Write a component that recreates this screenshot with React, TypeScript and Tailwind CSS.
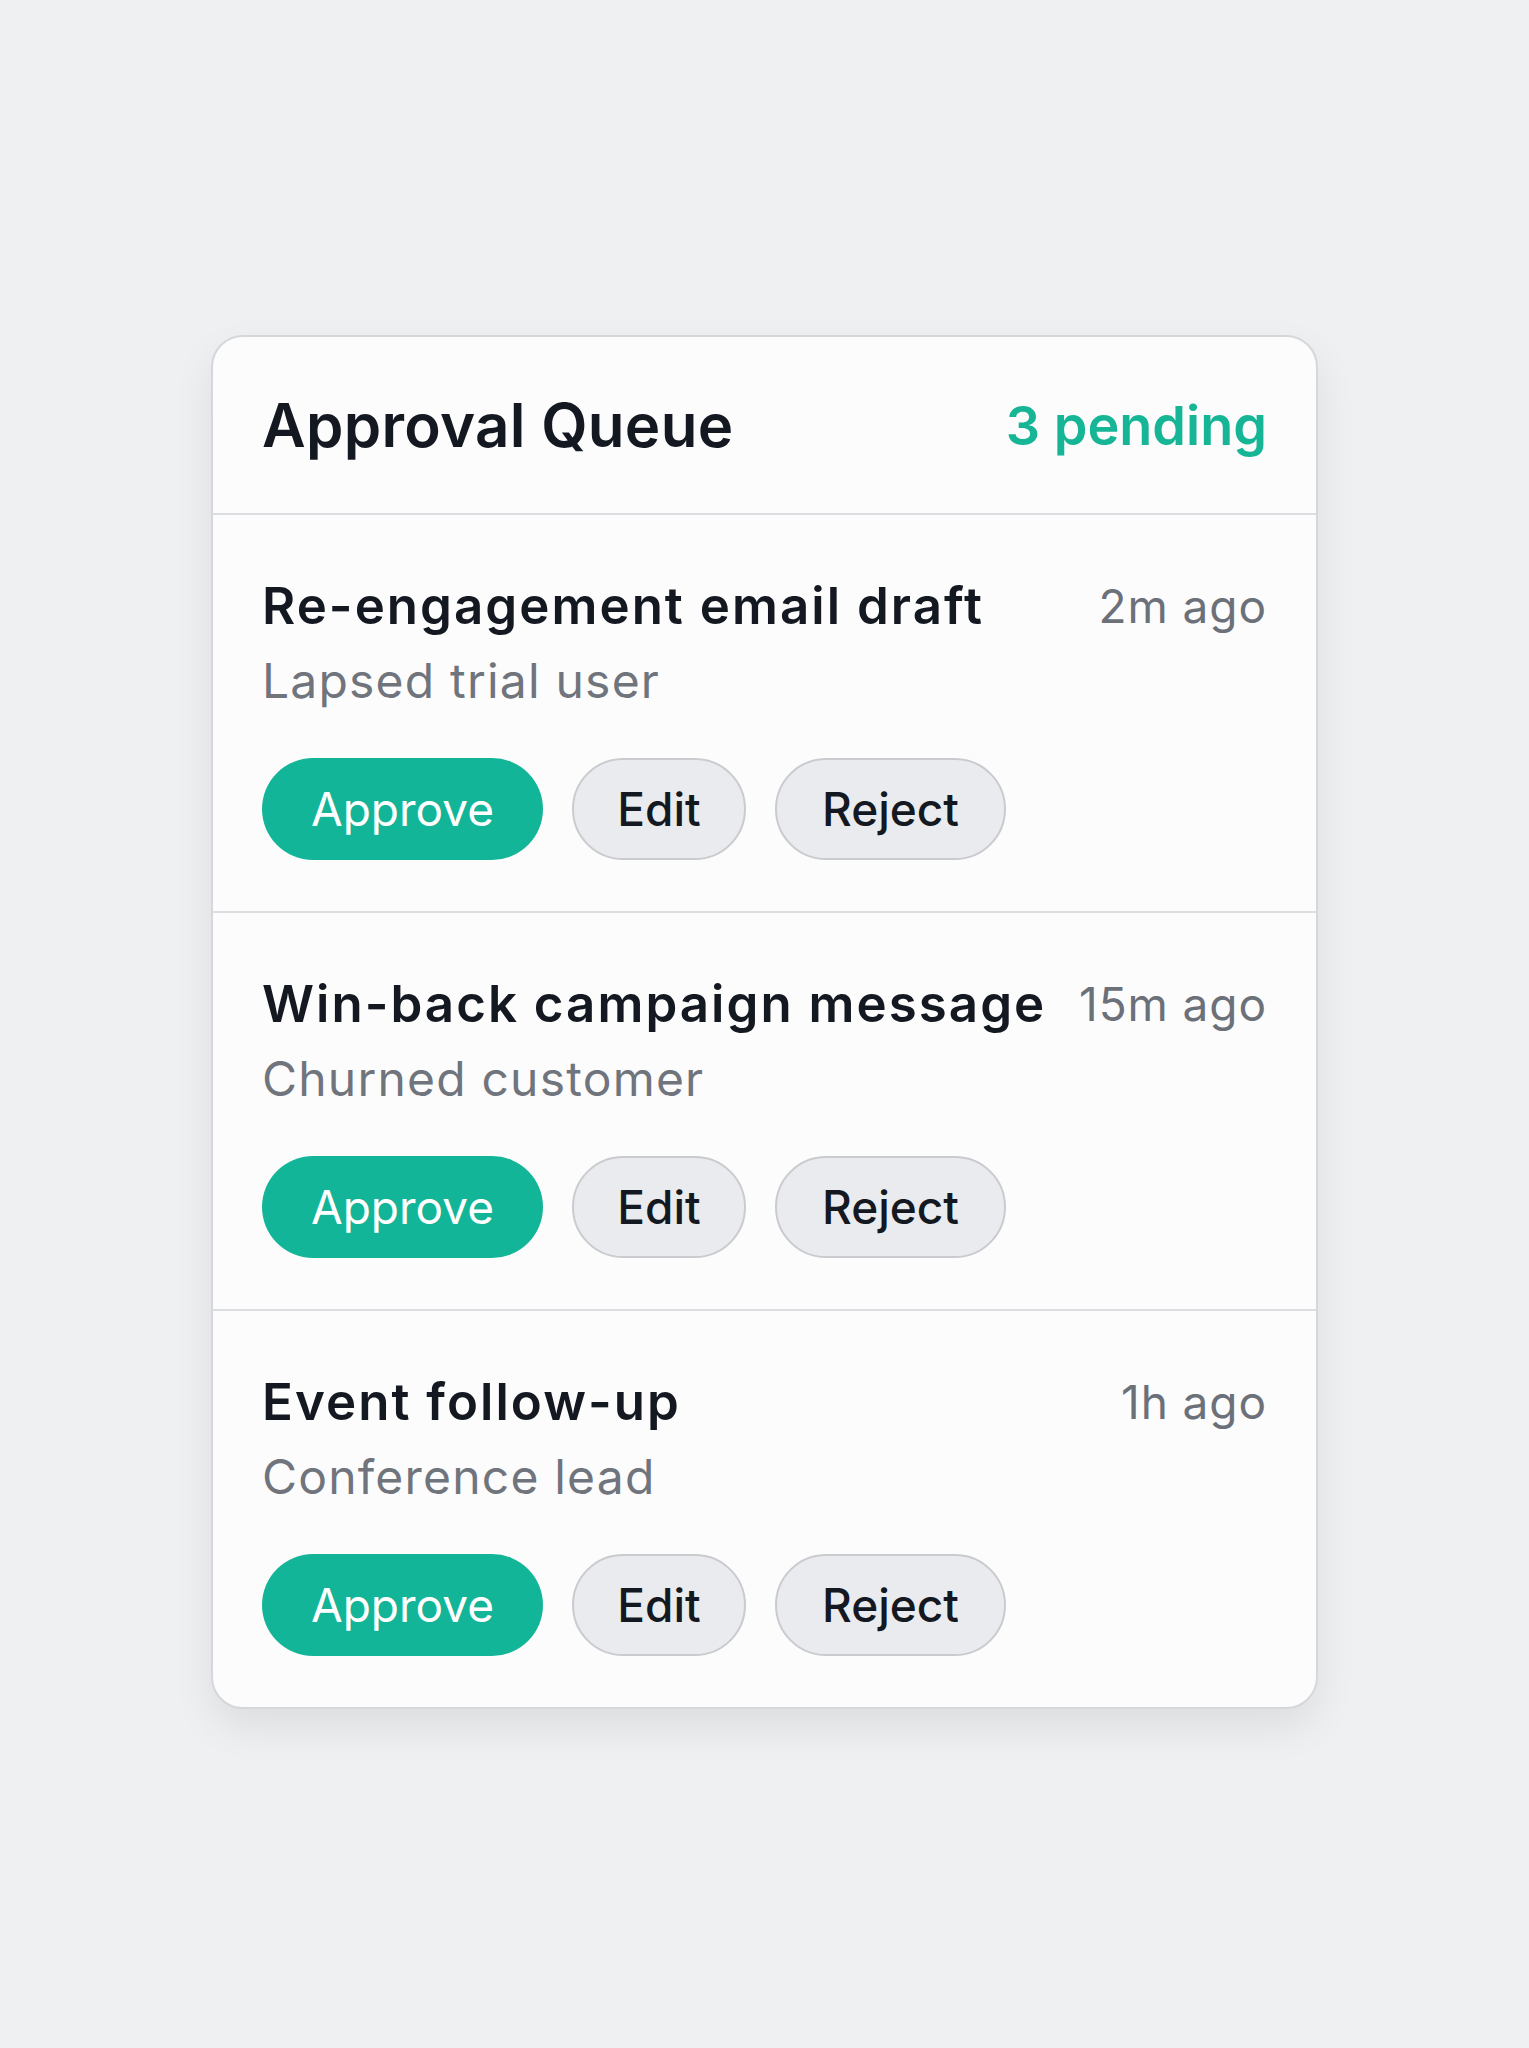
const items = [
  { title: "Re-engagement email draft", segment: "Lapsed trial user", time: "2m ago" },
  { title: "Win-back campaign message", segment: "Churned customer", time: "15m ago" },
  { title: "Event follow-up", segment: "Conference lead", time: "1h ago" },
];

const App = () => {
  return (
    <div
      className="min-h-[2048px] w-full bg-[#eff0f2] flex justify-center pt-[335px]"
      style={{ fontFamily: "Inter, 'Noto Sans', sans-serif" }}
    >
      <div className="w-[1107px] h-fit bg-[#fcfcfc] border-2 border-[#d5d7db] rounded-[32px] shadow-[0_18px_40px_rgba(0,0,0,0.08)] overflow-hidden">
        <div className="h-[178px] px-[49px] flex items-center justify-between border-b-2 border-[#dcdee1]">
          <h2 className="text-[60px] font-semibold text-[#141821] tracking-[0.005em]">Approval Queue</h2>
          <span className="text-[54px] font-semibold text-[#16b596]">3 pending</span>
        </div>
        {items.map((item, index) => (
          <div
            key={item.title}
            className={`px-[49px] pt-[60px] pb-[51px] ${index !== items.length - 1 ? "border-b-2 border-[#dcdee1]" : ""}`}
          >
            <div className="flex items-center justify-between gap-6 h-[62px]">
              <div className="text-[51px] leading-[62px] font-semibold text-[#141821] tracking-[0.04em]">{item.title}</div>
              <div className="text-[46px] leading-[62px] text-[#6b7079] tracking-[0.02em]">{item.time}</div>
            </div>
            <div className="mt-[13px] text-[48px] leading-[62px] text-[#70747c] tracking-[0.025em]">{item.segment}</div>
            <div className="mt-[46px] flex gap-[29px]">
              <button className="h-[102px] w-[281px] rounded-full bg-[#13b598] text-white text-[46px]">Approve</button>
              <button className="h-[102px] w-[174px] rounded-full bg-[#eaebee] border-2 border-[#c9cbcf] text-[#141821] text-[46px] font-medium">Edit</button>
              <button className="h-[102px] w-[231px] rounded-full bg-[#eaebee] border-2 border-[#c9cbcf] text-[#141821] text-[46px] font-medium">Reject</button>
            </div>
          </div>
        ))}
      </div>
    </div>
  );
};

export default App;
